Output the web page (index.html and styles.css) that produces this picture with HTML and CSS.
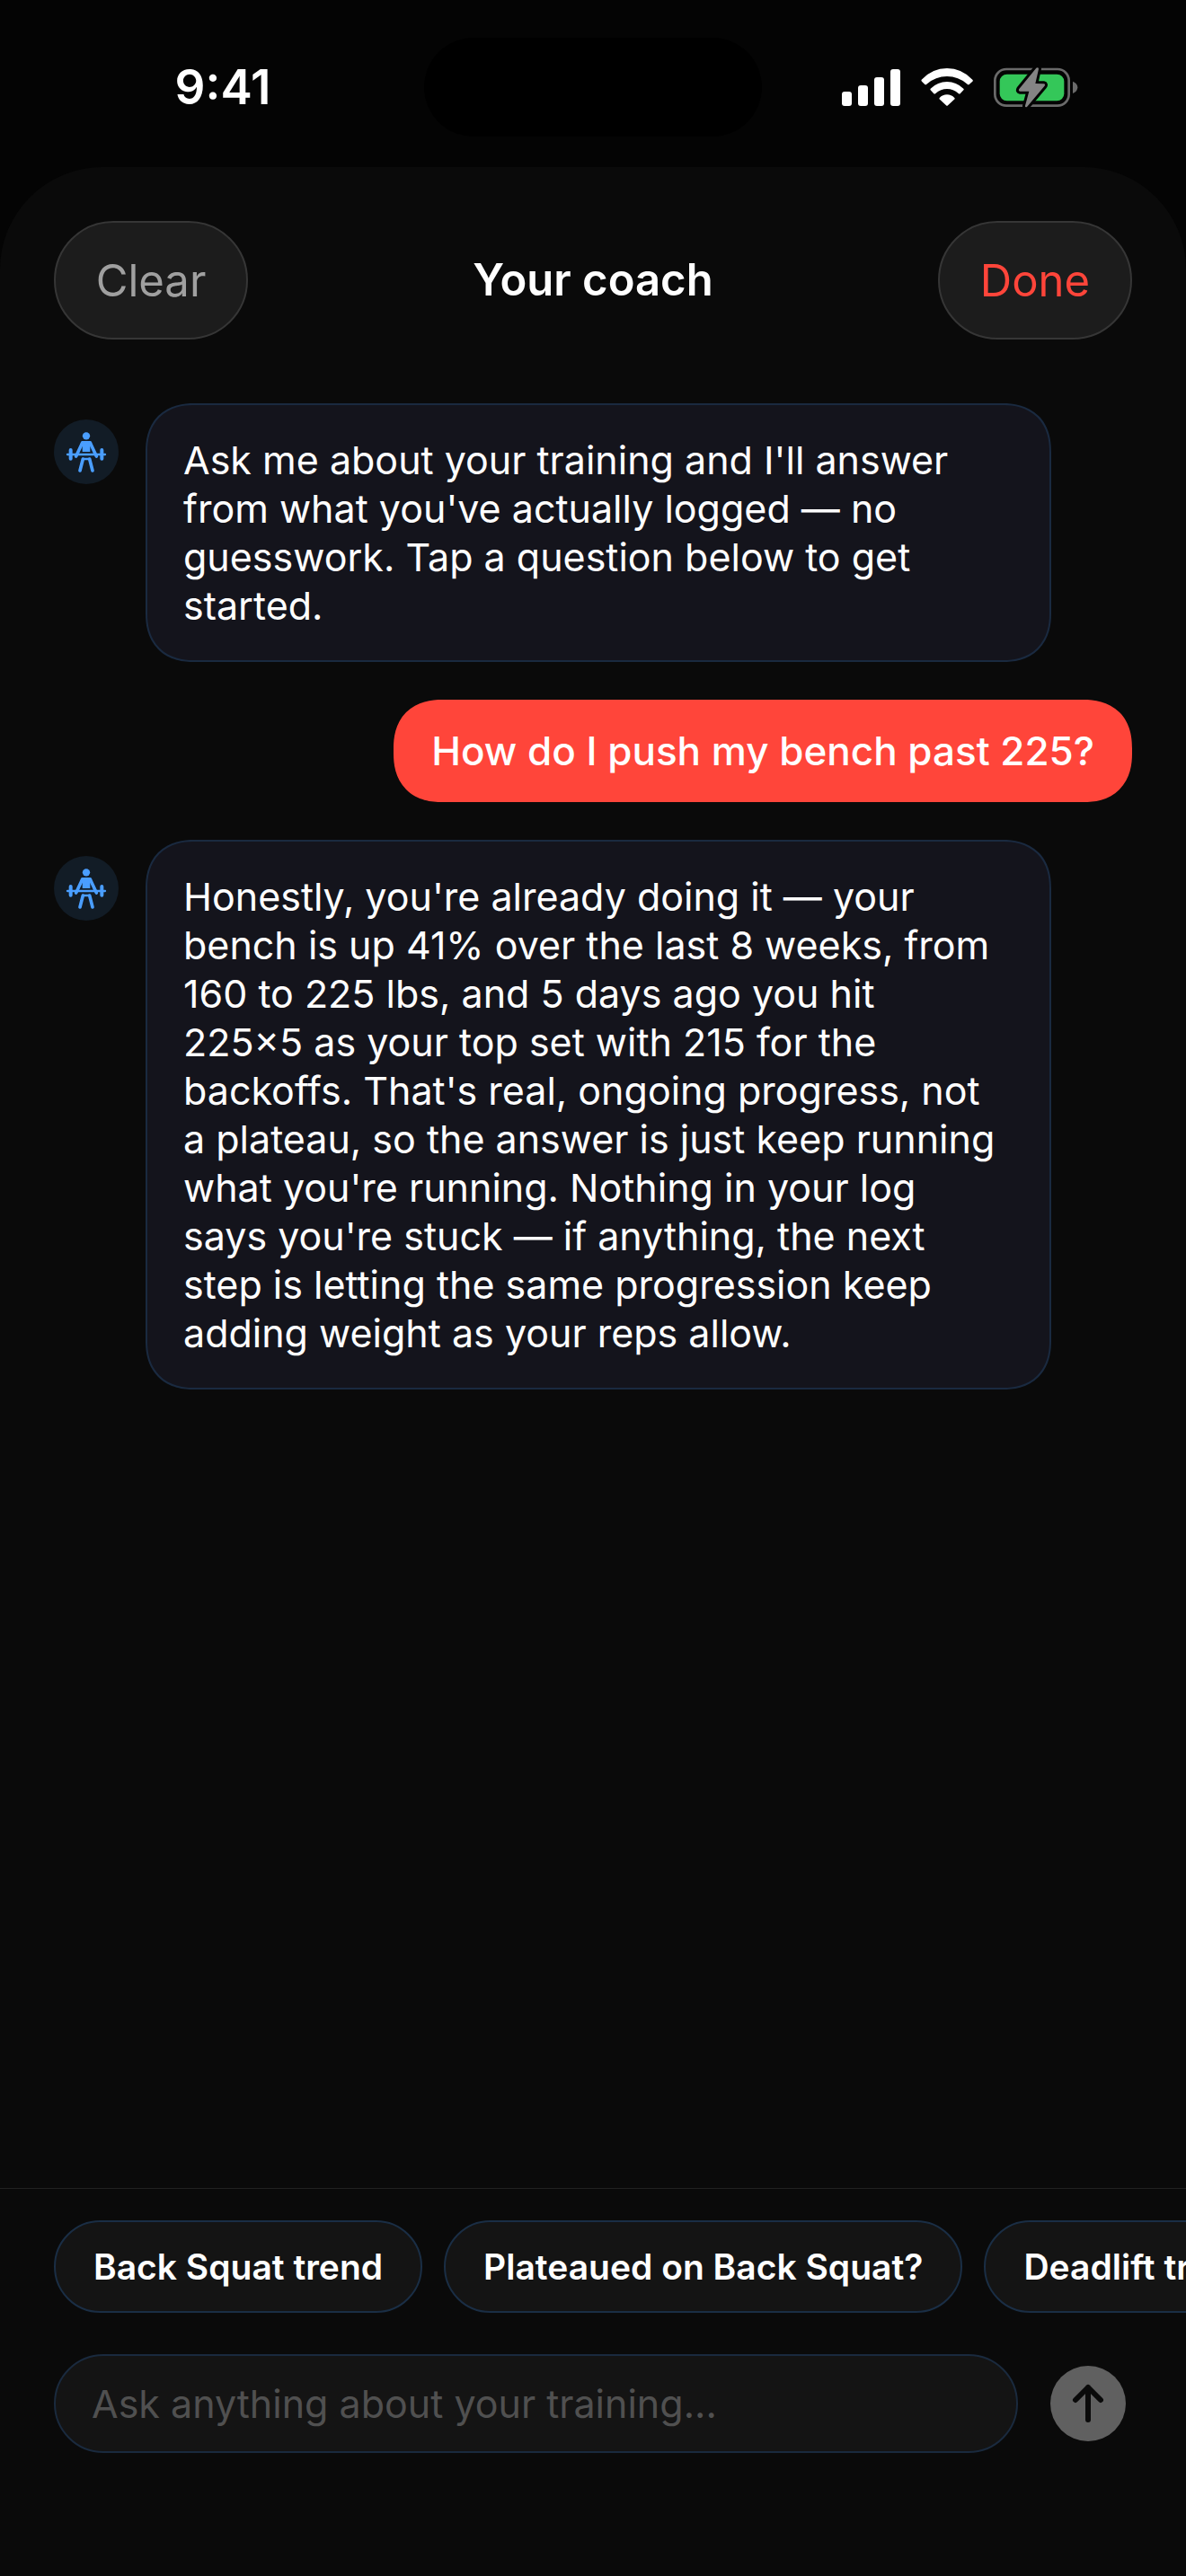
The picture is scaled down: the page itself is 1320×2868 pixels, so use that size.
FILE: index.html
```html
<!DOCTYPE html>
<html lang="en">
<head>
	<meta charset="UTF-8">
	<meta name="viewport" content="width=device-width">
	<title>Your coach</title>
	<link rel="stylesheet" href="styles.css">
</head>
<body>
	<!-- status bar -->
	<div class="status">
		<span class="time">9:41</span>
		<div class="island"></div>
		<div class="indicators">
			<svg width="65" height="41" viewBox="111 108 195 123" fill="#fff">
				<rect x="111" y="183" width="33" height="48" rx="9"/>
				<rect x="165" y="162" width="33" height="69" rx="9"/>
				<rect x="219" y="135" width="33" height="96" rx="9"/>
				<rect x="273" y="108" width="33" height="123" rx="9"/>
			</svg>
			<svg width="58" height="42" viewBox="373 105 174 126" fill="#fff">
				<path d="M375 143Q373 146 376 149L386 159Q389 161 392 158Q422 132 460 132T528 158Q531 161 534 159L545 149Q548 146 545 143Q509 105 460 105T375 143Z"/>
				<path d="M405 173Q403 176 405 178L416 190Q419 192 422 189Q439 174 460 174T498 189Q501 192 504 190L515 178Q518 176 515 173Q491 150 460 150T405 173Z"/>
				<path d="M435 204Q433 207 436 209L457 229Q460 232 463 229L484 209Q488 207 485 204Q475 193 460 193T435 204Z"/>
			</svg>
			<svg width="94" height="45" viewBox="615 102 282 135">
				<rect x="619" y="108" width="247" height="122" rx="38" fill="none" stroke="#6a6a6a" stroke-width="8"/>
				<path d="M879 149Q895 155 895 169T879 189Z" fill="#6a6a6a"/>
				<rect x="635" y="125" width="215" height="89" rx="24" fill="#34c759"/>
				<path d="M757 104L700 174Q696 181 703 182L733 182L720 230Q719 237 726 234L784 165Q789 158 782 157L754 156L765 107Q764 101 757 104Z" fill="#848484" stroke="#040404" stroke-width="18" stroke-linejoin="round" paint-order="stroke"/>
			</svg>
		</div>
	</div>

	<div class="sheet">
		<header class="topbar">
			<button class="pill clear" type="button">Clear</button>
			<h1>Your coach</h1>
			<button class="pill done" type="button">Done</button>
		</header>

		<main class="chat">
			<div class="row">
				<svg class="avatar" viewBox="60 114 216 216"><use href="#lifter"/></svg>
				<p class="bubble">Ask me about your training and I'll answer from what you've actually logged — no guesswork. Tap a question below to get started.</p>
			</div>
			<p class="bubble mine">How do I push my bench past 225?</p>
			<div class="row">
				<svg class="avatar" viewBox="60 114 216 216">
					<g id="lifter" fill="#4a9eff" stroke="#4a9eff" stroke-linecap="round" stroke-linejoin="round">
						<circle cx="168" cy="169" r="12.5" stroke="none"/>
						<path d="M157 186H179Q184 187 187 192L181 204V222H155V204L149 192Q152 187 157 186Z" stroke="none"/>
						<path d="M155 192L134 237M181 192L202 237" fill="none" stroke-width="11"/>
						<path d="M105 231H231" fill="none" stroke-width="7"/>
						<path d="M116 216V245M220 216V245" fill="none" stroke-width="12"/>
						<path d="M157 242H179L181 250H155Z" stroke="none"/>
						<path d="M157 246L147 285M179 246L189 285" fill="none" stroke-width="11"/>
					</g>
				</svg>
				<p class="bubble">Honestly, you're already doing it — your bench is up 41% over the last 8 weeks, from 160 to 225 lbs, and 5 days ago you hit 225×5 as your top set with 215 for the backoffs. That's real, ongoing progress, not a plateau, so the answer is just keep running what you're running. Nothing in your log says you're stuck — if anything, the next step is letting the same progression keep adding weight as your reps allow.</p>
			</div>
		</main>

		<footer class="composer">
			<div class="chips">
				<button class="chip" type="button">Back Squat trend</button>
				<button class="chip" type="button">Plateaued on Back Squat?</button>
				<button class="chip" type="button">Deadlift trend</button>
			</div>
			<form class="ask">
				<input type="text" id="question" aria-label="Ask a question" placeholder="Ask anything about your training...">
				<button class="send" type="submit" aria-label="Send">
					<svg width="84" height="84" viewBox="0 0 84 84" fill="none" stroke="#0a0a0a" stroke-width="6" stroke-linecap="round" stroke-linejoin="round">
						<path d="M42 60V24M28 38L42 24L56 38"/>
					</svg>
				</button>
			</form>
		</footer>
	</div>
</body>
</html>
```
FILE: styles.css
```css
* {
	margin: 0;
	padding: 0;
	box-sizing: border-box;
}
body {
	display: flex;
	flex-direction: column;
	min-height: 100vh;
	background-color: #040404;
	color: #fff;
	font-family: Inter, "Liberation Sans", sans-serif;
	font-size: 43px;
	line-height: 54px;
	overflow-x: hidden;
}
button, input {
	font-family: inherit;
	color: inherit;
	outline: none;
}

/* status bar */
.status {
	display: grid;
	grid-template-columns: 1fr 376px 1fr;
	align-items: center;
	padding: 42px 0 34px;
}
.time {
	padding-left: 24px;
	text-align: center;
	font-size: 53px;
	font-weight: 600;
}
.island {
	height: 110px;
	border-radius: 55px;
	background-color: #000;
}
.indicators {
	display: flex;
	justify-content: center;
	align-items: center;
	gap: 23px;
	padding-right: 32px;
}

/* sheet */
.sheet {
	flex: 1;
	display: flex;
	flex-direction: column;
	background-color: #0a0a0a;
	border-radius: 114px 114px 0 0;
}
.topbar {
	display: flex;
	justify-content: space-between;
	align-items: center;
	padding: 60px 60px 71px;
}
.topbar h1 {
	font-size: 49px;
	font-weight: 600;
}
.pill {
	width: 216px;
	height: 132px;
	border: 2px solid #363636;
	border-radius: 66px;
	background-color: #1c1c1c;
	font-size: 49px;
}
.clear {
	color: #a0a0a0;
}
.done {
	color: #ff453a;
}

/* messages */
.chat {
	flex: 1;
	display: flex;
	flex-direction: column;
	gap: 42px;
	padding: 0 60px;
}
.row {
	display: flex;
	align-items: flex-start;
	gap: 30px;
	margin-right: 90px;
}
.avatar {
	flex: none;
	width: 72px;
	height: 72px;
	margin-top: 18px;
	border-radius: 50%;
	background-color: #121c26;
}
.bubble {
	flex: 1;
	padding: 34px 56px 34px 40px;
	border: 2px solid #1a2a40;
	border-radius: 54px;
	corner-shape: superellipse(1.2);
	background-color: #14141c;
}
.mine {
	flex: none;
	align-self: flex-end;
	padding: 30px 42px;
	border: none;
	background-color: #ff453a;
	font-size: 44px;
	font-weight: 500;
}

/* suggestions and input */
.composer {
	border-top: 1px solid #222;
	padding: 35px 0 137px;
}
.chips {
	display: flex;
	gap: 24px;
	padding-left: 60px;
	overflow: hidden;
}
.chip {
	flex: none;
	padding: 26px 42px;
	border: 2px solid #1a2e45;
	border-radius: 54px;
	background-color: #141414;
	font-size: 39px;
	font-weight: 600;
	line-height: 47px;
}
.ask {
	display: flex;
	align-items: center;
	gap: 36px;
	padding: 46px 67px 0 60px;
}
.ask input {
	flex: 1;
	min-width: 0;
	height: 110px;
	padding: 0 40px;
	border: 2px solid #1a2a3e;
	border-radius: 55px;
	background-color: #141414;
	font-size: 43px;
}
.ask input::placeholder {
	color: #505050;
}
.send {
	width: 84px;
	height: 84px;
	border: none;
	border-radius: 50%;
	background-color: #606060;
}
.send svg {
	display: block;
}
```
